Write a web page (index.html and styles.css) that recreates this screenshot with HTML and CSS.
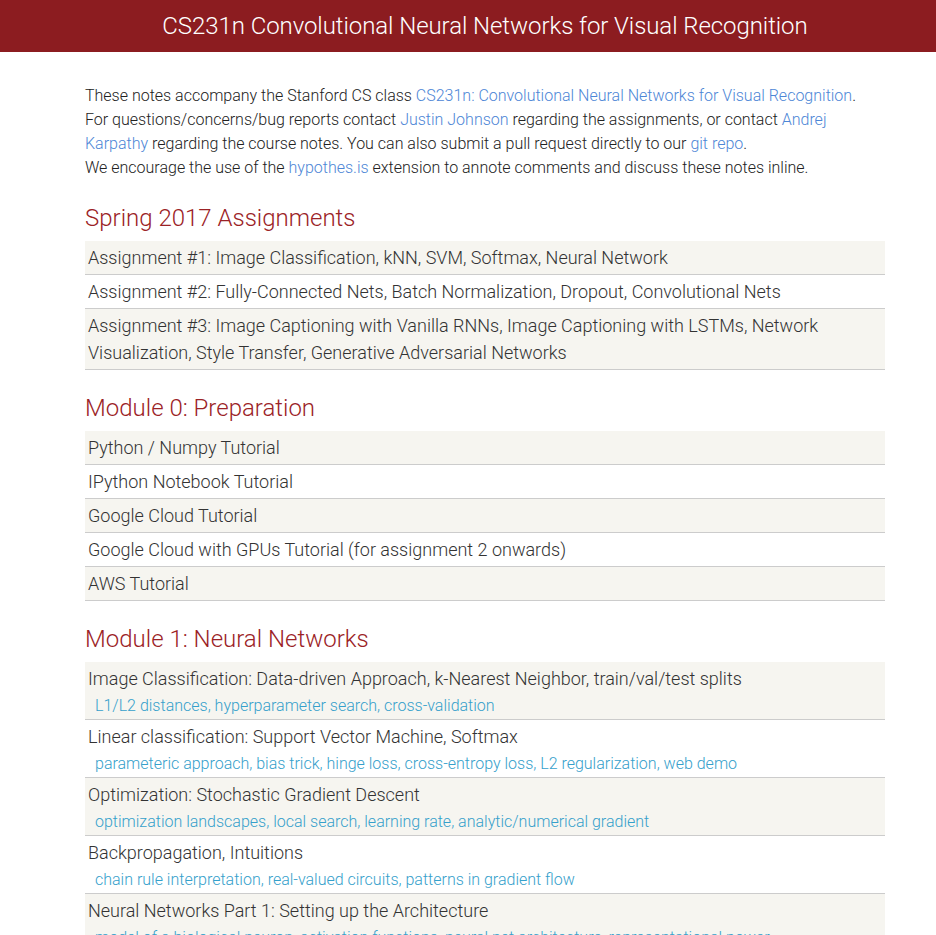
FILE: index.html
```
<!DOCTYPE html>
<html>
<head>
<meta charset="utf-8">
<title>CS231n Convolutional Neural Networks for Visual Recognition</title>
<link rel="stylesheet" href="styles.css">
</head>
<body>
<header class="site-header">
  <div class="wrap"><a class="site-title" href="#">CS231n Convolutional Neural Networks for Visual Recognition</a></div>
</header>
<main class="wrap page">
  <p class="intro">These notes accompany the Stanford CS class <a href="#">CS231n: Convolutional Neural Networks for Visual Recognition</a>.<br>
  For questions/concerns/bug reports contact <a href="#">Justin Johnson</a> regarding the assignments, or contact <a href="#">Andrej Karpathy</a> regarding the course notes. You can also submit a pull request directly to our <a href="#">git repo</a>.<br>
  We encourage the use of the <a href="#">hypothes.is</a> extension to annote comments and discuss these notes inline.</p>

  <section class="materials">
    <h2 class="module-header">Spring 2017 Assignments</h2>
    <div class="items">
      <div class="item"><a href="#">Assignment #1: Image Classification, kNN, SVM, Softmax, Neural Network</a></div>
      <div class="item"><a href="#">Assignment #2: Fully-Connected Nets, Batch Normalization, Dropout, Convolutional Nets</a></div>
      <div class="item"><a href="#">Assignment #3: Image Captioning with Vanilla RNNs, Image Captioning with LSTMs, Network Visualization, Style Transfer, Generative Adversarial Networks</a></div>
    </div>
  </section>

  <section class="materials">
    <h2 class="module-header">Module 0: Preparation</h2>
    <div class="items">
      <div class="item"><a href="#">Python / Numpy Tutorial</a></div>
      <div class="item"><a href="#">IPython Notebook Tutorial</a></div>
      <div class="item"><a href="#">Google Cloud Tutorial</a></div>
      <div class="item"><a href="#">Google Cloud with GPUs Tutorial (for assignment 2 onwards)</a></div>
      <div class="item"><a href="#">AWS Tutorial</a></div>
    </div>
  </section>

  <section class="materials">
    <h2 class="module-header">Module 1: Neural Networks</h2>
    <div class="items">
      <div class="item"><a href="#">Image Classification: Data-driven Approach, k-Nearest Neighbor, train/val/test splits</a>
        <div class="kw">L1/L2 distances, hyperparameter search, cross-validation</div></div>
      <div class="item"><a href="#">Linear classification: Support Vector Machine, Softmax</a>
        <div class="kw">parameteric approach, bias trick, hinge loss, cross-entropy loss, L2 regularization, web demo</div></div>
      <div class="item"><a href="#">Optimization: Stochastic Gradient Descent</a>
        <div class="kw">optimization landscapes, local search, learning rate, analytic/numerical gradient</div></div>
      <div class="item"><a href="#">Backpropagation, Intuitions</a>
        <div class="kw">chain rule interpretation, real-valued circuits, patterns in gradient flow</div></div>
      <div class="item"><a href="#">Neural Networks Part 1: Setting up the Architecture</a>
        <div class="kw">model of a biological neuron, activation functions, neural net architecture, representational power</div></div>
    </div>
  </section>
</main>
</body>
</html>
```
FILE: styles.css
```
html, body {
  margin: 0;
  padding: 0;
}
body {
  font-family: Roboto, "Noto Sans", sans-serif;
  font-weight: 300;
  font-size: 16px;
  line-height: 24px;
  color: #111;
  background: #fff;
}
a {
  text-decoration: none;
}
.wrap {
  width: 800px;
  margin-left: 85px;
}
.site-header {
  background-color: #8c1c20;
  height: 52px;
}
.site-header .wrap {
  text-align: center;
}
.site-title {
  display: inline-block;
  color: #fff;
  font-size: 24px;
  line-height: 52px;
  font-weight: 300;
  letter-spacing: -0.07px;
}
.page {
  padding-top: 32px;
}
.intro {
  margin: 0;
  color: #222;
}
.intro a {
  color: #4d86d6;
}
.materials {
  margin-top: 20px;
  font-size: 18px;
  line-height: 27px;
}
.module-header {
  margin: 0 0 5px;
  font-size: 24px;
  line-height: 36px;
  font-weight: 300;
  color: #9b2226;
}
.item {
  padding: 3px;
  border-bottom: 1px solid #ccc;
}
.item:nth-child(odd) {
  background-color: #f6f5f0;
}
.item a {
  color: #333;
}
.kw {
  font-size: 16px;
  line-height: 21px;
  padding-top: 3px;
  margin-left: 7px;
  color: #35a0cb;
}
```
